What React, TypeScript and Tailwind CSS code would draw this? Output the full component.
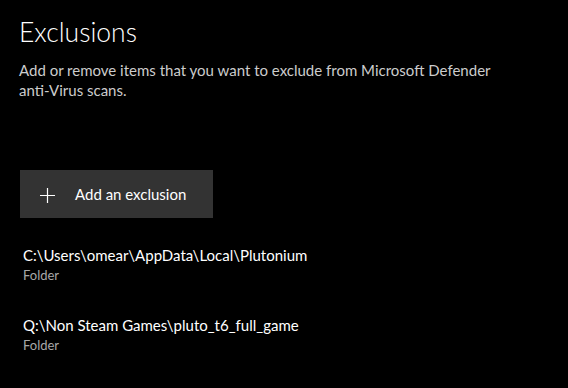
const items = [
  { path: "C:\\Users\\omear\\AppData\\Local\\Plutonium", kind: "Folder" },
  { path: "Q:\\Non Steam Games\\pluto_t6_full_game", kind: "Folder" },
];

export default function App() {
  return (
    <div className="h-[388px] w-[568px] overflow-hidden bg-black font-['Lato',sans-serif] text-white">
      <div className="px-[19px] pt-[14px]">
        <h1 className="text-[26.5px] font-light leading-[36px]">Exclusions</h1>
        <p className="mt-[10px] w-[500px] text-[15px] leading-[20px] text-[#cccccc]">
          Add or remove items that you want to exclude from Microsoft Defender anti-Virus scans.
        </p>

        <button className="mt-[70px] ml-px flex h-[48px] w-[193px] items-center bg-[#333333] pl-[20px] text-[15px]">
          <svg width="15" height="15" viewBox="0 0 15 15" className="mt-[2px]">
            <path d="M7.5 0v15M0 7.5h15" stroke="white" strokeWidth="1.2" fill="none" />
          </svg>
          <span className="ml-[20px]">Add an exclusion</span>
        </button>

        <div className="mt-[27px] flex flex-col gap-[30px] pl-[4px]">
          {items.map((it) => (
            <div key={it.path} className="flex flex-col">
              <span className="text-[15px] leading-[20px]">{it.path}</span>
              <span className="text-[13px] leading-[20px] text-[#a8a8a8]">{it.kind}</span>
            </div>
          ))}
        </div>
      </div>
    </div>
  );
}
